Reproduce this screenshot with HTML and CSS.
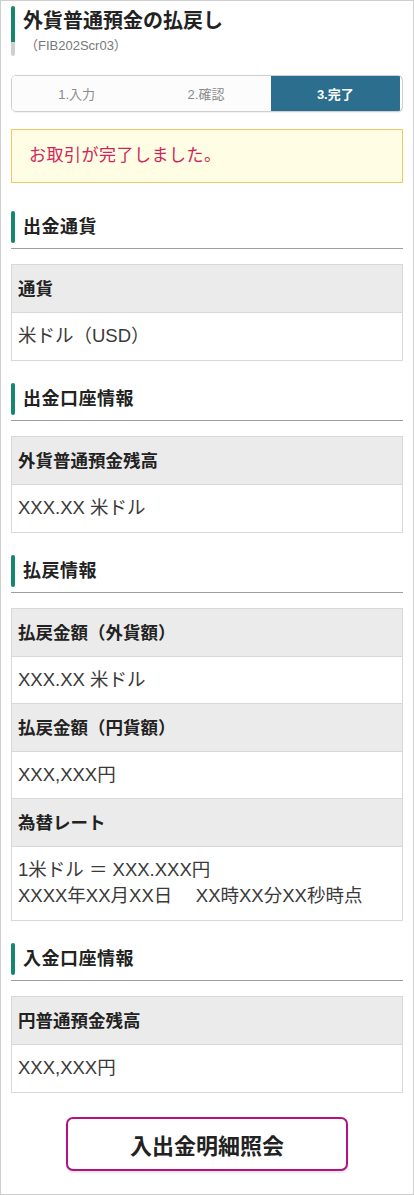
FILE: index.html
```html
<!DOCTYPE html>
<html lang="ja">
<head>
  <meta charset="UTF-8">
  <meta name="viewport" content="width=device-width, initial-scale=1.0">
  <title>外貨普通預金の払戻し</title>
  <link rel="stylesheet" href="styles.css">
</head>
<body>
  <div class="page">
    <div class="page-title">
      <h1>外貨普通預金の払戻し</h1>
      <p class="screen-id">（FIB202Scr03）</p>
    </div>

    <ol class="steps">
      <li>1.入力</li>
      <li>2.確認</li>
      <li class="current">3.完了</li>
    </ol>

    <div class="notice">お取引が完了しました。</div>

    <h2 class="section-title"><span>出金通貨</span></h2>
    <dl class="info">
      <dt>通貨</dt>
      <dd>米ドル（USD）</dd>
    </dl>

    <h2 class="section-title"><span>出金口座情報</span></h2>
    <dl class="info">
      <dt>外貨普通預金残高</dt>
      <dd>XXX.XX 米ドル</dd>
    </dl>

    <h2 class="section-title"><span>払戻情報</span></h2>
    <dl class="info">
      <dt>払戻金額（外貨額）</dt>
      <dd>XXX.XX 米ドル</dd>
      <dt>払戻金額（円貨額）</dt>
      <dd>XXX,XXX円</dd>
      <dt>為替レート</dt>
      <dd>1米ドル ＝ XXX.XXX円<br>XXXX年XX月XX日　 XX時XX分XX秒時点</dd>
    </dl>

    <h2 class="section-title"><span>入金口座情報</span></h2>
    <dl class="info">
      <dt>円普通預金残高</dt>
      <dd>XXX,XXX円</dd>
    </dl>

    <div class="actions">
      <button type="button" class="btn-outline">入出金明細照会</button>
    </div>
  </div>
</body>
</html>
```

FILE: styles.css
```css
* {
  box-sizing: border-box;
}

html, body {
  margin: 0;
  padding: 0;
}

body {
  font-family: "Liberation Sans", "Noto Sans CJK JP", sans-serif;
  color: #333;
  background: #fff;
}

.page {
  width: 414px;
  min-height: 1195px;
  border: 1px solid #cfcfcf;
  padding: 5px 10px 20px;
}

/* page title */
.page-title {
  position: relative;
  padding-left: 12px;
  height: 50px;
}

.page-title::before {
  content: "";
  position: absolute;
  left: 0;
  top: 0;
  width: 4px;
  height: 50px;
  border-radius: 2px;
  background: linear-gradient(#14876d 0, #14876d 36px, #cfcfcf 36px);
}

h1 {
  margin: 0;
  font-size: 20px;
  line-height: 30px;
  font-weight: bold;
  color: #222;
}

.screen-id {
  margin: 0;
  padding-left: 2px;
  font-size: 13px;
  line-height: 20px;
  color: #777;
}

/* steps */
.steps {
  display: flex;
  list-style: none;
  margin: 19px 0 0;
  padding: 0;
  height: 37px;
  border: 1px solid #cfcfcf;
  border-radius: 5px;
  overflow: hidden;
  box-shadow: 0 1px 1px rgba(0, 0, 0, 0.06);
}

.steps li {
  flex: 1;
  display: flex;
  align-items: center;
  justify-content: center;
  font-size: 13px;
  color: #8a8a8a;
  background: #fcfcfc;
}

.steps li.current {
  background: #2b6e8e;
  color: #fff;
  font-weight: bold;
  border-right: 2px solid #fff;
}

/* notice */
.notice {
  margin-top: 17px;
  padding: 14px 17px;
  border: 1px solid #f4c660;
  background: #fffde3;
  color: #d1245c;
  font-size: 17px;
  line-height: 24px;
  letter-spacing: 0.5px;
}

/* sections */
.section-title {
  margin: 28px 0 0;
  padding-bottom: 5px;
  border-bottom: 1px solid #9e9e9e;
  font-size: 18px;
  font-weight: bold;
  color: #222;
}

.section-title span {
  display: block;
  position: relative;
  padding-left: 12px;
  line-height: 32px;
  letter-spacing: 0.5px;
}

.section-title span::before {
  content: "";
  position: absolute;
  left: 0;
  top: 0;
  width: 4px;
  height: 32px;
  border-radius: 2px;
  background: #14876d;
}

.info + .section-title {
  margin-top: 22px;
}

.info {
  margin: 15px 0 0;
  border: 1px solid #d8d8d8;
  line-height: 26px;
}

.info dt {
  background: #ebebeb;
  font-size: 17.5px;
  font-weight: bold;
  color: #222;
  padding: 11px 6px 10px;
  border-bottom: 1px solid #d8d8d8;
}

.info dd {
  margin: 0;
  padding: 10px 6px;
  font-size: 18.5px;
  color: #3a3a3a;
  border-bottom: 1px solid #d8d8d8;
}

.info dd:last-child {
  padding-bottom: 11px;
  border-bottom: none;
}

/* button */
.actions {
  display: flex;
  justify-content: center;
  margin-top: 24px;
}

.btn-outline {
  width: 282px;
  height: 54px;
  border: 2px solid #b5127f;
  border-radius: 7px;
  background: #fff;
  box-shadow: 0 2px 2px rgba(0, 0, 0, 0.1);
  font-family: inherit;
  font-size: 22px;
  font-weight: bold;
  color: #222;
  cursor: pointer;
}
```
